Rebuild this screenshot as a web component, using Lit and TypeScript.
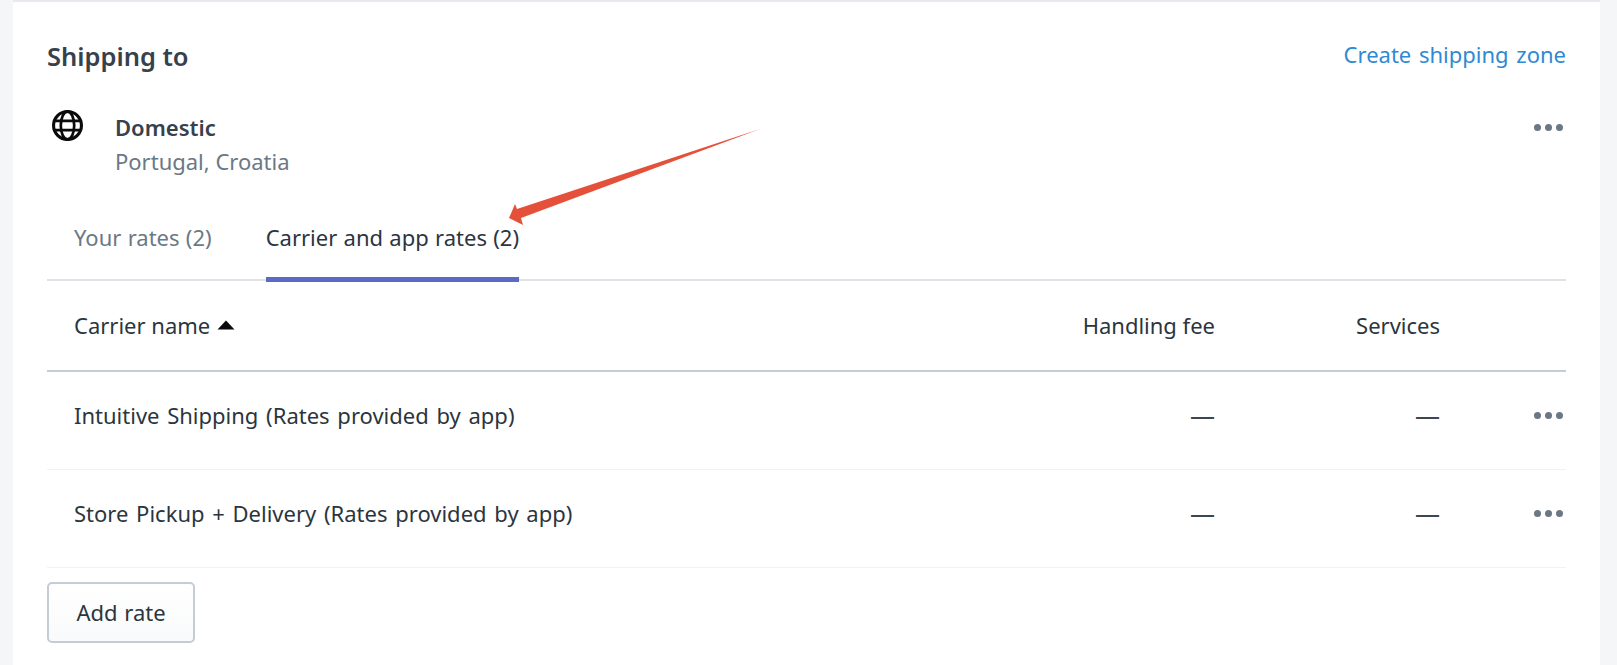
import { LitElement, html, css } from "lit";
import { customElement } from "lit/decorators.js";

const rows = ["Intuitive Shipping (Rates provided by app)", "Store Pickup + Delivery (Rates provided by app)"];

@customElement("app-root")
export class AppRoot extends LitElement {
  static styles = css`
    :host {
      display: block;
      position: relative;
      height: 665px;
      overflow: hidden;
      background: #f4f6f8;
      font-family: "Noto Sans", "Open Sans", sans-serif;
      font-size: 22px;
      color: #2b3540;
    }
    .card {
      margin: 0 17px 0 13px;
      height: 665px;
      box-sizing: border-box;
      background: #fff;
      border-top: 2px solid #e6e9ed;
      padding: 0 34px;
    }
    .head {
      height: 108px;
      display: flex;
      align-items: center;
      justify-content: space-between;
    }
    .head h2 {
      margin: 0;
      font-size: 25.5px;
      font-weight: 600;
      color: #36414c;
    }
    .link {
      color: #2f8ad1;
      margin-bottom: 4px;
      word-spacing: 2px;
    }
    .zone {
      display: flex;
      height: 69px;
    }
    .globe {
      width: 31px;
      height: 31px;
      margin: 0 32px 0 5px;
      flex: none;
    }
    .zone-text {
      flex: 1;
      line-height: 34px;
    }
    .zone-name {
      font-weight: 600;
      color: #36414c;
    }
    .sub {
      color: #6b7885;
    }
    .dots {
      display: flex;
      gap: 4px;
      margin-right: 3px;
    }
    .dots i {
      width: 7px;
      height: 7px;
      border-radius: 50%;
      background: #6b7785;
    }
    .zone .dots {
      margin-top: 14px;
    }
    .tabs {
      height: 102px;
      box-sizing: border-box;
      border-bottom: 2px solid #dfe3e8;
      display: flex;
      padding-left: 27px;
      gap: 54px;
      word-spacing: 0.6px;
    }
    .tab {
      height: 103px;
      box-sizing: border-box;
      padding-top: 41px;
      line-height: 34px;
      color: #6b7885;
    }
    .tab.active {
      color: #2b3540;
      border-bottom: 5px solid #5c6ac4;
    }
    .grid {
      display: grid;
      grid-template-columns: 1fr 150px 225px 126px;
      align-items: center;
      padding-left: 27px;
    }
    .grid .num {
      text-align: right;
    }
    .grid .dots {
      justify-content: flex-end;
    }
    .thead {
      height: 91px;
      box-sizing: border-box;
      border-bottom: 2px solid #c4cdd5;
      padding-bottom: 2px;
    }
    .sort {
      display: flex;
      align-items: center;
      gap: 7px;
    }
    .sort svg {
      width: 18px;
      height: 10px;
    }
    .row {
      height: 98px;
      box-sizing: border-box;
      border-bottom: 1px solid #f0f2f4;
      padding-bottom: 12px;
      word-spacing: 2px;
    }
    .row .dots {
      margin-top: 2px;
    }
    .row .num {
      font-size: 25px;
      color: #3d4752;
    }
    .btn {
      display: block;
      margin-top: 14px;
      width: 148px;
      height: 61px;
      box-sizing: border-box;
      padding: 0 0 2px;
      border: 2px solid #c4cdd5;
      border-radius: 5px;
      background: linear-gradient(to bottom, #fff, #f9fafb);
      font: inherit;
      word-spacing: 1px;
      color: #2b3540;
    }
    .arrow {
      position: absolute;
      left: 0;
      top: 0;
      width: 1617px;
      height: 665px;
      pointer-events: none;
    }
  `;

  dots() {
    return html`<div class="dots"><i></i><i></i><i></i></div>`;
  }

  render() {
    return html`
      <div class="card">
        <div class="head">
          <h2>Shipping to</h2>
          <span class="link">Create shipping zone</span>
        </div>
        <div class="zone">
          <svg class="globe" viewBox="0 0 30 30" fill="none" stroke="#0b0b0b" stroke-width="3">
            <circle cx="15" cy="15" r="13.5"></circle>
            <ellipse cx="15" cy="15" rx="6.5" ry="13.5" stroke-width="2.6"></ellipse>
            <path d="M2 10.5h26M2 19.5h26" stroke-width="2.6"></path>
          </svg>
          <div class="zone-text">
            <div class="zone-name">Domestic</div>
            <div class="sub">Portugal, Croatia</div>
          </div>
          ${this.dots()}
        </div>
        <div class="tabs">
          <div class="tab">Your rates (2)</div>
          <div class="tab active">Carrier and app rates (2)</div>
        </div>
        <div class="grid thead">
          <div class="sort">
            Carrier name
            <svg viewBox="0 0 18 10"><path d="M9 0.5 L17.5 9.5 H0.5 Z" fill="#0b0b0b"></path></svg>
          </div>
          <div class="num">Handling fee</div>
          <div class="num">Services</div>
          <div></div>
        </div>
        ${rows.map(
          (name) => html`
            <div class="grid row">
              <div>${name}</div>
              <div class="num">—</div>
              <div class="num">—</div>
              ${this.dots()}
            </div>
          `
        )}
        <button class="btn">Add rate</button>
      </div>
      <svg class="arrow" viewBox="0 0 1617 665">
        <path d="M760 129 L517 209 L515 204 L509 218 L523 225 L521 218 Z" fill="#e5503a"></path>
      </svg>
    `;
  }
}
